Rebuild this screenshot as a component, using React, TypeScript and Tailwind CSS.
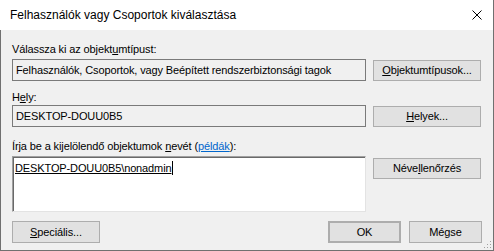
import React from 'react';

const font = "font-['Liberation_Sans',Arial,sans-serif]";

function Btn({ children, className = '' }: { children: React.ReactNode; className?: string }) {
  return (
    <div
      className={`flex items-center justify-center bg-[#e1e1e1] border border-[#adadad] text-[11px] leading-[13px] text-black ${className}`}
    >
      {children}
    </div>
  );
}

export default function App() {
  return (
    <div className={`w-[494px] h-[251px] flex flex-col ${font} text-[11px] leading-[13px] tracking-[-0.12px] text-black`}>
      {/* title bar */}
      <div className="h-[30px] bg-white flex items-center border-r border-[#707070] pl-[10px] pr-[10px]">
        <span className="text-[12px] tracking-normal pt-[1px]">Felhasználók vagy Csoportok kiválasztása</span>
        <svg className="ml-auto mr-[1px]" width="10" height="10" viewBox="0 0 10 10">
          <path d="M0.5 0.5 L9.5 9.5 M9.5 0.5 L0.5 9.5" stroke="#000" strokeWidth="1" />
        </svg>
      </div>

      {/* body */}
      <div className="flex-1 bg-[#f0f0f0] border-l border-r border-b border-[#707070] pl-[11px] pr-[11px] flex flex-col relative">
        <div className="mt-[13px]">
          Válassza ki az objekt<u>u</u>mtípust:
        </div>
        <div className="flex mt-[3px] items-start">
          <div className="w-[354px] h-[22px] border border-[#7a7a7a] flex items-center pl-[3px]">
            Felhasználók, Csoportok, vagy Beépített rendszerbiztonsági tagok
          </div>
          <Btn className="ml-[7px] mt-[1px] w-[108px] h-[21px]">
            <span><u>O</u>bjektumtípusok...</span>
          </Btn>
        </div>

        <div className="mt-[10px]">
          H<u>e</u>ly:
        </div>
        <div className="flex mt-[1px] items-start">
          <div className="w-[354px] h-[22px] border border-[#7a7a7a] flex items-center pl-[3px]">
            DESKTOP-DOUU0B5
          </div>
          <Btn className="ml-[7px] mt-[1px] w-[108px] h-[21px]">
            <span><u>H</u>elyek...</span>
          </Btn>
        </div>

        <div className="mt-[13px]">
          Írja be a kijelölendő objektumok <u>n</u>evét (<span className="text-[#0066cc] underline">példák</span>):
        </div>
        <div className="flex mt-[3px] items-start">
          <div className="w-[354px] h-[56px] bg-white border-t border-l border-[#a0a0a0] border-r border-b border-r-[#e3e3e3] border-b-[#e3e3e3] shadow-[inset_1px_1px_0_#696969] pl-[2px] pt-[4px]">
            <span className="underline">DESKTOP-DOUU0B5\nonadmin</span>
            <span className="inline-block w-px h-[14px] bg-black align-[-3px] ml-[1px]" />
          </div>
          <Btn className="ml-[7px] mt-[2px] w-[108px] h-[21px]">
            <span>Néve<u>l</u>lenőrzés</span>
          </Btn>
        </div>

        <div className="flex mt-[9px] items-start">
          <Btn className="w-[88px] h-[22px]">
            <span><u>S</u>peciális...</span>
          </Btn>
          <Btn className="ml-auto w-[73px] h-[22px] border-2 border-[#0078d7]">
            <span>OK</span>
          </Btn>
          <Btn className="ml-[8px] w-[73px] h-[22px]">
            <span>Mégse</span>
          </Btn>
        </div>

        {/* size grip */}
        <svg className="absolute right-[1px] bottom-[1px]" width="10" height="10" viewBox="0 0 10 10">
          <rect x="8" y="2" width="1" height="1" fill="#a0a0a0" />
          <rect x="5" y="5" width="1" height="1" fill="#a0a0a0" />
          <rect x="8" y="5" width="1" height="1" fill="#a0a0a0" />
          <rect x="2" y="8" width="1" height="1" fill="#a0a0a0" />
          <rect x="5" y="8" width="1" height="1" fill="#a0a0a0" />
          <rect x="8" y="8" width="1" height="1" fill="#a0a0a0" />
        </svg>
      </div>
    </div>
  );
}
